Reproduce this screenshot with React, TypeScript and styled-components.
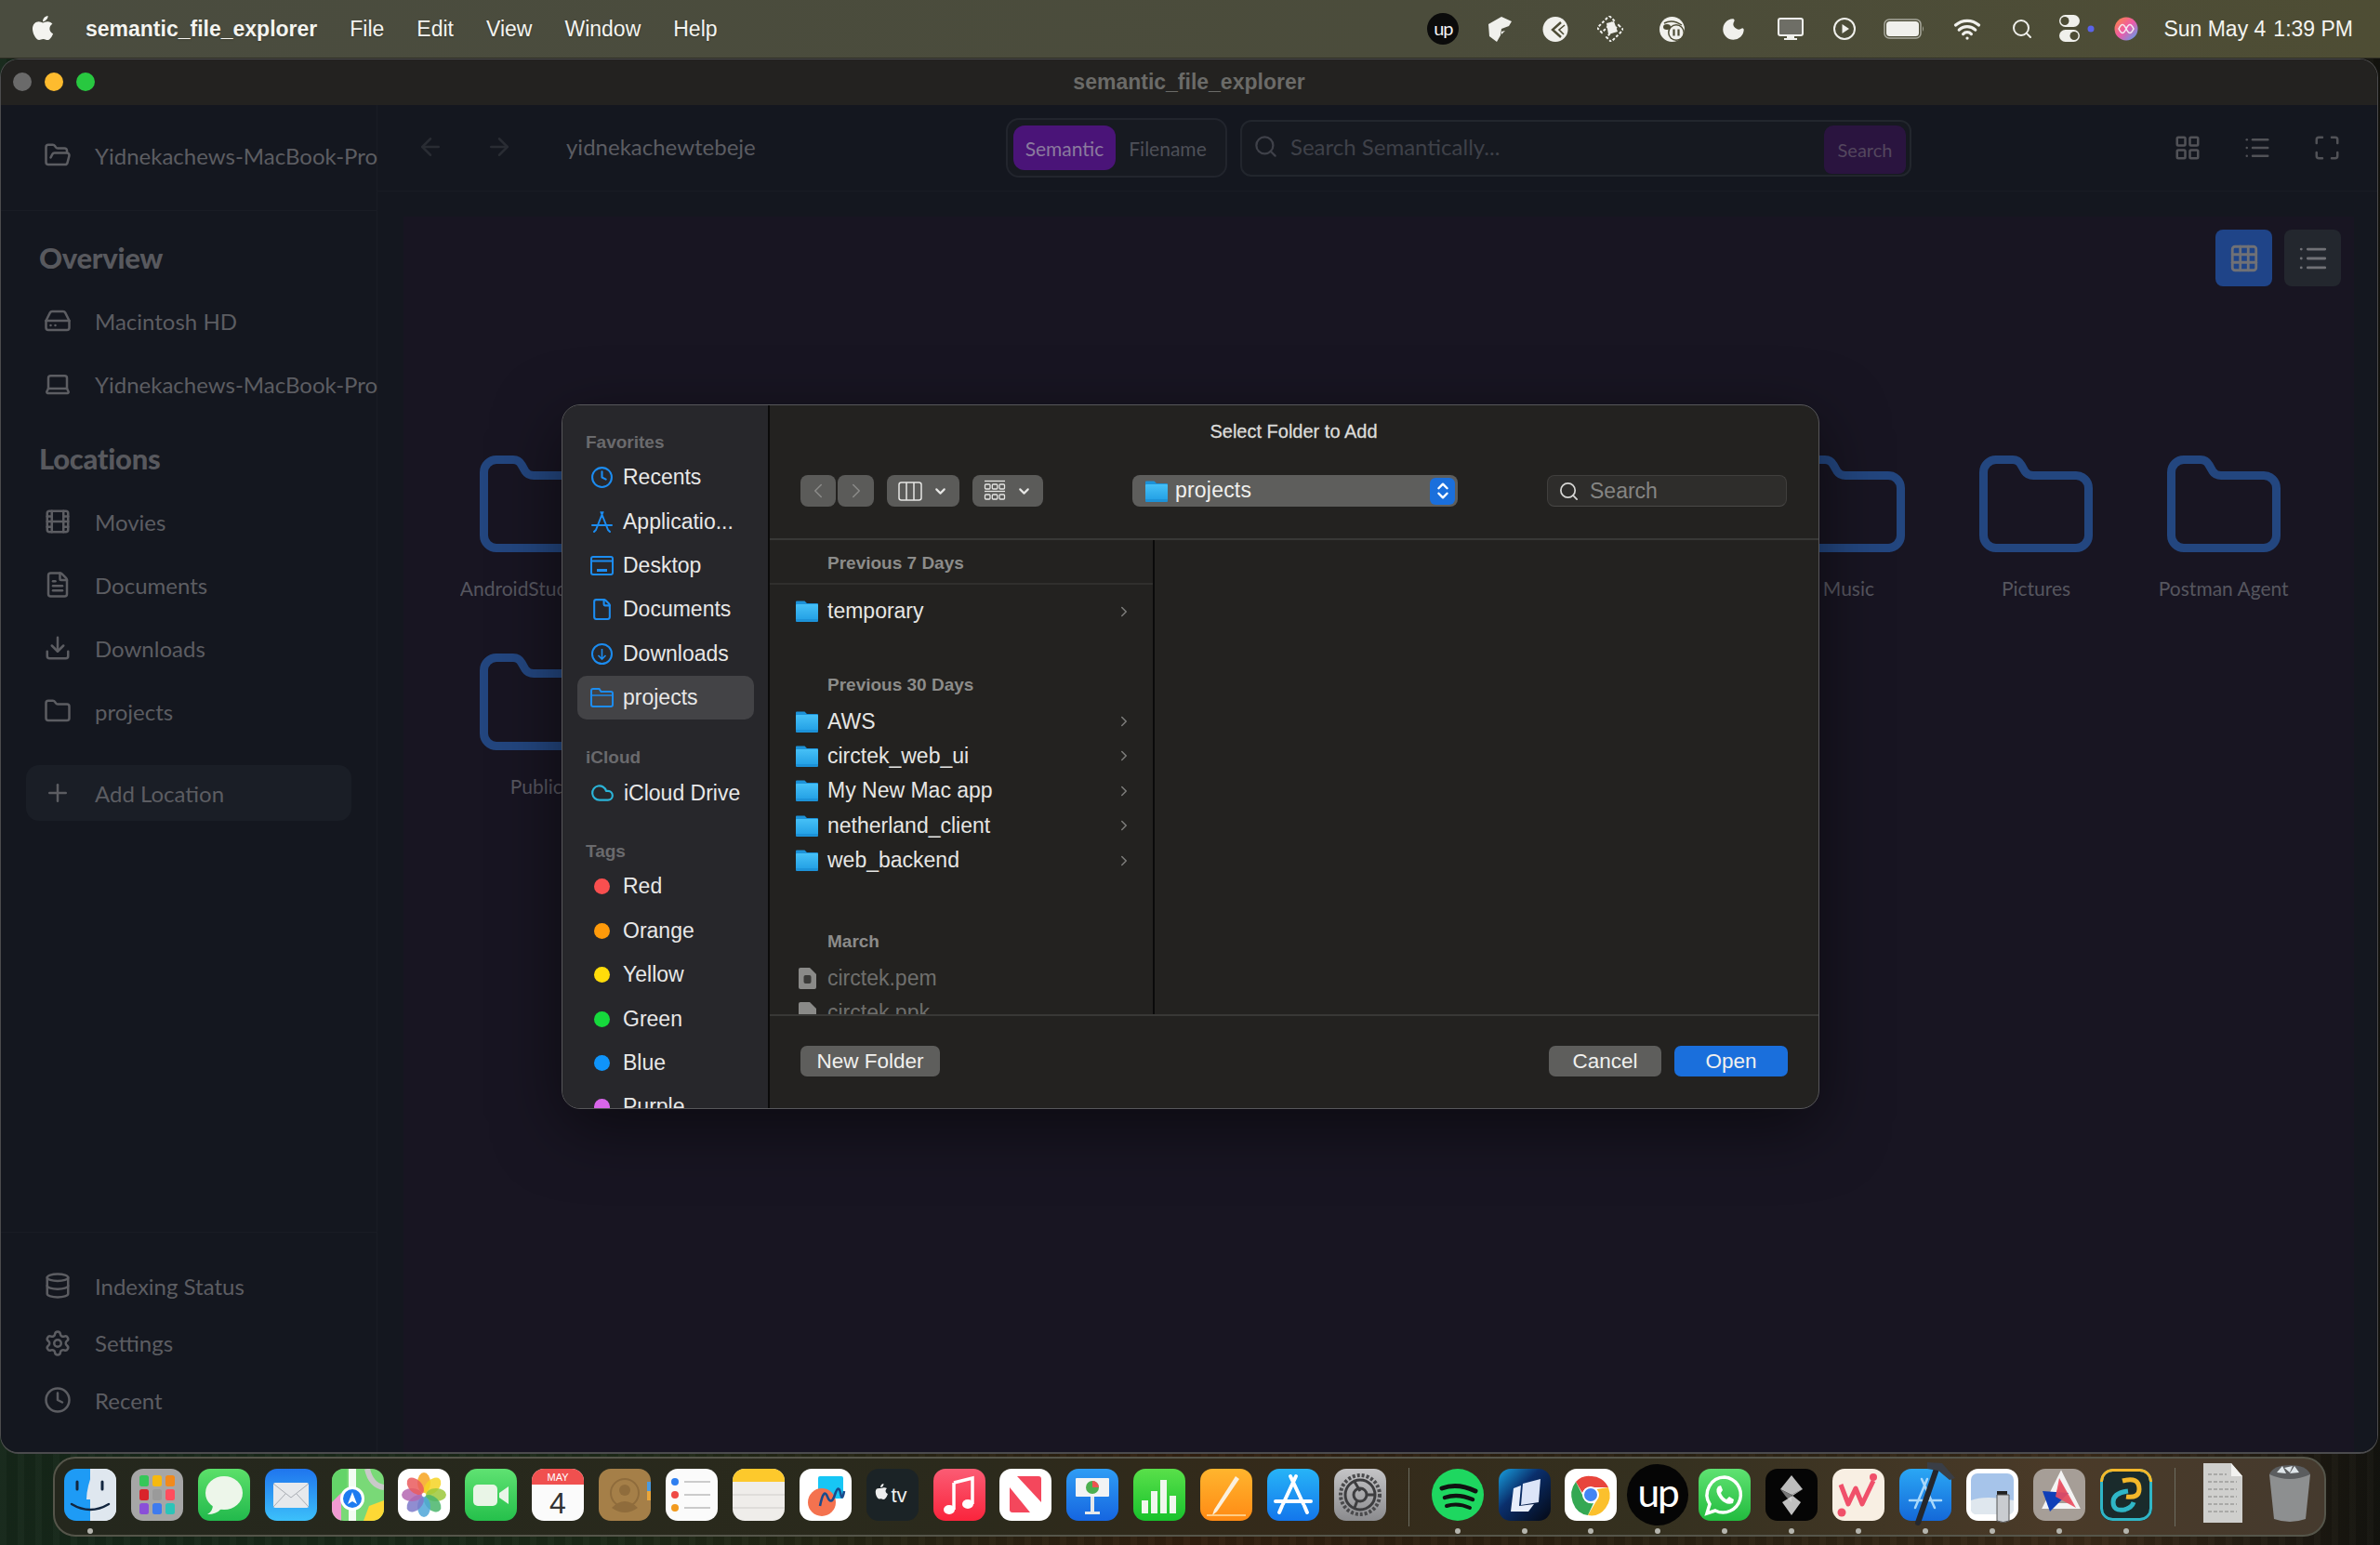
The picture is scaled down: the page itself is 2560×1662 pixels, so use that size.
import { FC, ReactNode } from "react";
import styled, { createGlobalStyle } from "styled-components";
import { FaApple } from "react-icons/fa";
import {
  ArrowLeft,
  ArrowRight,
  ChevronDown,
  ChevronLeft,
  ChevronRight,
  ChevronsUpDown,
  Clock,
  Cloud,
  Database,
  Download,
  File,
  FileText,
  Film,
  Folder,
  FolderOpen,
  Grid3x3,
  HardDrive,
  Laptop,
  LayoutGrid,
  List,
  Maximize,
  Moon,
  Plus,
  Search,
  Settings,
  Wifi,
} from "lucide-react";

const Global = createGlobalStyle`
  html, body {
    margin: 0;
    padding: 0;
    width: 2560px;
    height: 1662px;
    overflow: hidden;
    background: #1a2016;
  }
  * { box-sizing: border-box; }
`;

const Desktop = styled.div`
  width: 2560px;
  height: 1662px;
  display: flex;
  flex-direction: column;
  font-family: "Liberation Sans", Arial, sans-serif;
  background:
    repeating-linear-gradient(90deg, rgba(255, 255, 255, 0.015) 0 7px, rgba(0, 0, 0, 0.08) 7px 19px),
    linear-gradient(90deg, #16281a 0%, #1c2a18 25%, #33200f 50%, #2a2212 70%, #3a2a18 88%, #14140f 100%);
`;

/* ---------- menu bar ---------- */

const MenuBar = styled.header`
  height: 63px;
  flex: none;
  display: flex;
  align-items: center;
  padding-right: 29px;
  color: #f4f4f0;
  font-size: 23px;
  background: linear-gradient(90deg, #4a4c3f 0%, #4b4c3b 60%, #4e4d34 100%);
  border-bottom: 1px solid #2c2b22;
`;

const AppleSlot = styled.div`
  width: 92px;
  display: flex;
  justify-content: center;
  margin-top: -3px;
`;

const MenuItems = styled.nav`
  display: flex;
  gap: 35px;
`;

const MenuLabel = styled.span<{ $app?: boolean }>`
  font-weight: ${(p) => (p.$app ? 700 : 400)};
  text-shadow: 0 1px 2px rgba(0, 0, 0, 0.25);
`;

const Extras = styled.div`
  margin-left: auto;
  display: flex;
  align-items: center;
`;

const Extra = styled.div<{ $w: number }>`
  width: ${(p) => p.$w}px;
  display: flex;
  align-items: center;
  justify-content: center;
`;

const Clockface = styled.div`
  margin-left: 14px;
  display: flex;
  gap: 8px;
`;

/* ---------- app window ---------- */

const AppWindow = styled.section`
  position: relative;
  height: 1501px;
  flex: none;
  margin-right: 2px;
  display: flex;
  flex-direction: column;
  border: 1px solid #4b4b4d;
  border-bottom-width: 2px;
  border-radius: 20px;
  overflow: hidden;
  font-family: Lato, "Noto Sans", sans-serif;
`;

const TitleBar = styled.div`
  position: relative;
  height: 49px;
  flex: none;
  display: flex;
  align-items: center;
  justify-content: center;
  background: #232220;
  color: #6b6b68;
  font: 700 23px "Liberation Sans", Arial, sans-serif;
`;

const Lights = styled.div`
  position: absolute;
  left: 13px;
  top: 14px;
  display: flex;
  gap: 14px;
`;

const Light = styled.span<{ $c: string }>`
  width: 20px;
  height: 20px;
  border-radius: 50%;
  background: ${(p) => p.$c};
`;

const WindowBody = styled.div`
  flex: 1;
  min-height: 0;
  display: flex;
`;

const Sidebar = styled.aside`
  width: 405px;
  flex: none;
  display: flex;
  flex-direction: column;
  background: #14171f;
  border-right: 1px solid #191c24;
  color: #5c5d62;
`;

const SidebarHead = styled.div`
  height: 114px;
  flex: none;
  padding: 0 0 5px 27px;
  display: flex;
  align-items: center;
  font-size: 24px;
  white-space: nowrap;
  border-bottom: 1px solid #191c24;
`;

const HeadIcon = styled.span`
  width: 74px;
  padding-left: 19px;
  flex: none;
  display: flex;
`;

const SideGroup = styled.div`
  padding-left: 27px;
  display: flex;
  flex-direction: column;
  gap: 8px;
`;

const SideTitle = styled.h2`
  margin: 30px 0 18px;
  padding-left: 41px;
  height: 40px;
  line-height: 40px;
  font-size: 31px;
  font-weight: 900;
  color: #58595e;
  letter-spacing: -0.3px;
`;

const SideRow = styled.div<{ $tall?: boolean; $filled?: boolean }>`
  width: 350px;
  height: ${(p) => (p.$tall ? 48 : 60)}px;
  padding-left: 19px;
  display: flex;
  align-items: center;
  gap: 25px;
  font-size: 24px;
  white-space: nowrap;
  border-radius: 14px;
  background: ${(p) => (p.$filled ? "#1a1e26" : "transparent")};
  margin-top: ${(p) => (p.$filled ? 20 : 0)}px;
  svg {
    flex: none;
  }
`;

const SideFoot = styled.div`
  margin-top: auto;
  padding: 33px 0 32px 27px;
  display: flex;
  flex-direction: column;
  gap: 13.5px;
  border-top: 1px solid #191c24;
`;

const Main = styled.main`
  flex: 1;
  min-width: 0;
  display: flex;
  flex-direction: column;
  background: #14171f;
`;

const MainHead = styled.div`
  height: 93px;
  flex: none;
  display: flex;
  align-items: center;
  padding: 0 39px 0 42px;
  border-bottom: 1px solid #191c24;
`;

const NavArrows = styled.div`
  display: flex;
  gap: 44px;
  color: #292c33;
  margin-top: -2px;
`;

const PathName = styled.div`
  width: 530px;
  padding-left: 57px;
  font-size: 24px;
  color: #5b5c62;
  margin-top: -3px;
`;

const ModeToggle = styled.div`
  width: 238px;
  height: 64px;
  flex: none;
  padding: 6px;
  display: flex;
  align-items: center;
  background: #171a21;
  border: 2px solid #22252d;
  border-radius: 14px;
  font-size: 21px;
`;

const ModeOption = styled.span<{ $on?: boolean }>`
  height: 48px;
  width: ${(p) => (p.$on ? 112 : 114)}px;
  display: flex;
  align-items: center;
  justify-content: center;
  border-radius: 12px;
  background: ${(p) => (p.$on ? "#4a1478" : "transparent")};
  color: ${(p) => (p.$on ? "#8b7a9e" : "#4e5058")};
`;

const SearchBox = styled.div`
  width: 722px;
  height: 61px;
  flex: none;
  margin-left: 14px;
  padding: 3px 4px 0 12px;
  display: flex;
  align-items: center;
  background: #161920;
  border: 2px solid #22262d;
  border-radius: 12px;
  color: #3f4149;
`;

const SearchHint = styled.span`
  flex: 1;
  padding-left: 13px;
  font-size: 24px;
  margin-top: -7px;
`;

const SearchButton = styled.span`
  width: 88px;
  height: 52px;
  display: flex;
  align-items: center;
  justify-content: center;
  border-radius: 10px 10px 8px 8px;
  background: #2a143f;
  color: #54475e;
  font-size: 20px;
`;

const HeadTools = styled.div`
  margin-left: auto;
  display: flex;
  gap: 45px;
  color: #515257;
`;

const ContentWrap = styled.div`
  flex: 1;
  min-height: 0;
  padding: 27px 25px 0 28px;
  display: flex;
`;

const Content = styled.div`
  flex: 1;
  padding: 14px 14px 0 42px;
  background: #181522;
  display: flex;
  flex-direction: column;
`;

const ViewSwitch = styled.div`
  display: flex;
  justify-content: flex-end;
  gap: 13px;
`;

const ViewButton = styled.span<{ $on?: boolean }>`
  width: 61px;
  height: 61px;
  display: flex;
  align-items: center;
  justify-content: center;
  border-radius: 8px;
  color: #707176;
  background: ${(p) => (p.$on ? "#1f4488" : "#23272e")};
`;

const FolderGrid = styled.div`
  margin-top: 182px;
  display: grid;
  grid-template-columns: repeat(10, 201.67px);
  row-gap: 58px;
`;

const FolderCell = styled.div`
  display: flex;
  flex-direction: column;
  align-items: center;
  color: #23467f;
`;

const FolderName = styled.span`
  max-width: 164px;
  height: 24px;
  line-height: 24px;
  margin-top: 27px;
  font-size: 21px;
  color: #56565f;
  white-space: nowrap;
  overflow: hidden;
  text-overflow: ellipsis;
`;

/* ---------- open panel ---------- */

const Panel = styled.div`
  position: absolute;
  left: 603px;
  top: 371px;
  width: 1353px;
  height: 758px;
  display: flex;
  overflow: hidden;
  border-radius: 20px;
  border: 1px solid #57575a;
  background: #232220;
  font-family: "Liberation Sans", Arial, sans-serif;
  box-shadow: 0 20px 70px rgba(0, 0, 0, 0.5);
`;

const PanelSide = styled.div`
  width: 223px;
  flex: none;
  padding: 29px 0 0 16px;
  background: #27272b;
  border-right: 2px solid #0a0a0a;
  display: flex;
  flex-direction: column;
`;

const PanelGroup = styled.span<{ $first?: boolean; $gap?: number }>`
  height: 22px;
  line-height: 22px;
  margin: ${(p) => (p.$first ? 0 : (p.$gap ?? 30))}px 0 3px 9px;
  font-size: 19px;
  font-weight: 700;
  color: #6a6a6d;
`;

const PanelPlace = styled.div<{ $on?: boolean }>`
  width: 190px;
  height: 47.4px;
  flex: none;
  padding-left: 14px;
  display: flex;
  align-items: center;
  gap: 10px;
  font-size: 23px;
  color: #e8e8e8;
  border-radius: 10px;
  background: ${(p) => (p.$on ? "#434346" : "transparent")};
  svg {
    flex: none;
    color: #1c8cf0;
  }
`;

const TagDot = styled.span<{ $c: string }>`
  width: 17px;
  height: 17px;
  margin: 0 4px;
  border-radius: 50%;
  background: ${(p) => p.$c};
`;

const PanelMain = styled.div`
  flex: 1;
  min-width: 0;
  display: flex;
  flex-direction: column;
`;

const PanelHead = styled.div`
  height: 145px;
  flex: none;
  padding: 17px 34px 0 33px;
  border-bottom: 2px solid #383836;
`;

const PanelTitle = styled.div`
  height: 22px;
  line-height: 22px;
  text-align: center;
  font-size: 20px;
  color: #dcdcda;
  -webkit-text-stroke: 0.3px #dcdcda;
`;

const PanelTools = styled.div`
  margin-top: 36px;
  height: 34px;
  display: flex;
  justify-content: space-between;
`;

const ToolCluster = styled.div`
  display: flex;
  gap: 2px;
`;

const ToolButton = styled.span<{ $w: number; $gap?: number; $dim?: boolean }>`
  width: ${(p) => p.$w}px;
  height: 34px;
  margin-left: ${(p) => p.$gap ?? 0}px;
  display: flex;
  align-items: center;
  justify-content: center;
  gap: 11px;
  border-radius: 8px;
  background: #5b5b59;
  color: ${(p) => (p.$dim ? "#8b8b89" : "#e6e6e4")};
`;

const PathPopup = styled.div`
  width: 350px;
  height: 34px;
  padding: 0 3px 0 14px;
  display: flex;
  align-items: center;
  gap: 8px;
  border-radius: 8px;
  background: #5e5e5c;
  font-size: 23px;
  color: #f0f0ee;
`;

const PathText = styled.span`
  margin-top: -2px;
  letter-spacing: 0.2px;
`;

const Stepper = styled.span`
  margin-left: auto;
  width: 27px;
  height: 29px;
  display: flex;
  align-items: center;
  justify-content: center;
  border-radius: 6px;
  background: #1a6fdc;
  color: #fff;
`;

const FindField = styled.div`
  width: 258px;
  height: 34px;
  padding-left: 11px;
  display: flex;
  align-items: center;
  gap: 11px;
  border-radius: 8px;
  background: #2e2d2b;
  border: 1px solid #403f3d;
  border-bottom-color: #4a4947;
  font-size: 23px;
  color: #858583;
  svg {
    color: #d6d6d4;
  }
`;

const Browser = styled.div`
  flex: 1;
  min-height: 0;
  display: flex;
`;

const BrowserColumn = styled.div`
  width: 414px;
  flex: none;
  overflow: hidden;
  border-right: 2px solid #0a0a0a;
`;

const SectionHead = styled.div<{ $gap?: number; $sticky?: boolean }>`
  height: ${(p) => (p.$sticky ? 48 : 36)}px;
  margin-top: ${(p) => p.$gap ?? 0}px;
  margin-bottom: ${(p) => (p.$sticky ? 10 : 2)}px;
  padding: ${(p) => (p.$sticky ? 4 : 0)}px 0 0 62px;
  display: flex;
  align-items: center;
  font-size: 19px;
  font-weight: 700;
  color: #8c8c8a;
  border-bottom: ${(p) => (p.$sticky ? "2px solid #302f2d" : "none")};
`;

const BrowserRow = styled.div<{ $muted?: boolean }>`
  height: 37.4px;
  padding: 0 22px 0 28px;
  display: flex;
  align-items: center;
  gap: 10px;
  font-size: 23px;
  color: ${(p) => (p.$muted ? "#6f6f6d" : "#e6e6e4")};
`;

const RowChevron = styled(ChevronRight)`
  margin-left: auto;
  color: #7d7d7b;
`;

const PanelFoot = styled.div`
  height: 101px;
  flex: none;
  padding: 32px 33px 0 33px;
  display: flex;
  justify-content: space-between;
  border-top: 2px solid #383836;
`;

const FootActions = styled.div`
  display: flex;
  gap: 14px;
`;

const FootButton = styled.span<{ $w: number; $primary?: boolean }>`
  width: ${(p) => p.$w}px;
  height: 33px;
  display: flex;
  align-items: center;
  justify-content: center;
  border-radius: 7px;
  font-size: 22.5px;
  color: #f0f0ee;
  background: ${(p) => (p.$primary ? "#1a6fdc" : "#5e5e5c")};
`;

/* ---------- dock ---------- */

const Dock = styled.footer`
  position: relative;
  width: 2445px;
  height: 86px;
  flex: none;
  margin: 3px 0 0 57px;
  padding: 11px 0 0 10px;
  display: flex;
  align-items: flex-start;
  gap: 15.9px;
  border: 2px solid #55554a;
  border-radius: 24px;
  background: linear-gradient(90deg, #24271d 0%, #2b2a1c 40%, #352a1a 55%, #34301f 70%, #4a3a28 88%, #453a2e 100%);
`;

const Tile = styled.div<{ $bg: string; $round?: boolean; $scale?: number; $plain?: boolean }>`
  position: relative;
  width: 56px;
  height: 56px;
  flex: none;
  border-radius: ${(p) => (p.$round ? "50%" : "13px")};
  background: ${(p) => p.$bg};
  overflow: ${(p) => (p.$plain ? "visible" : "hidden")};
  transform: scale(${(p) => p.$scale ?? 1});
  svg {
    display: block;
    overflow: visible;
  }
`;

const TileWrap = styled.div<{ $running?: boolean }>`
  position: relative;
  width: 56px;
  height: 56px;
  flex: none;
  &::after {
    content: "";
    display: ${(p) => (p.$running ? "block" : "none")};
    position: absolute;
    left: 25px;
    bottom: -14px;
    width: 6px;
    height: 6px;
    border-radius: 50%;
    background: #b5b5ae;
  }
`;

const UpMark = styled.span`
  position: absolute;
  inset: 0;
  display: flex;
  align-items: center;
  justify-content: center;
  font: 400 36px Lato, sans-serif;
  letter-spacing: -2px;
  color: #fff;
  padding-bottom: 6px;
`;

const MiniUp = styled.span`
  width: 34px;
  height: 34px;
  display: flex;
  align-items: center;
  justify-content: center;
  border-radius: 50%;
  background: #0b0b0b;
  color: #f4f4f4;
  font: 400 20px Lato, sans-serif;
  letter-spacing: -1px;
  padding-bottom: 3px;
`;

const DockRule = styled.span`
  width: 1px;
  height: 63px;
  flex: none;
  margin: -1px 8px 0;
  background: #6c6c60;
`;

const PlainDockArt = styled.svg<{ $left: number }>`
  display: block;
  margin: -6px 0 0 ${(p) => p.$left}px;
`;

/* ---------- drawings ---------- */

const BigFolder: FC = () => (
  <svg width="122" height="104" viewBox="0 0 122 104" fill="none" stroke="currentColor" strokeWidth="9">
    <path d="M18 4.5H36Q42 4.500 45 10L49 17Q52 21.500 58 21.500H104A13.500 13.500 0 0 1 117.500 35V86A13.500 13.500 0 0 1 104 99.500H18A13.500 13.500 0 0 1 4.500 86V18A13.500 13.500 0 0 1 18 4.500Z" />
  </svg>
);

const BlueFolder: FC<{ w?: number; h?: number }> = ({ w = 24, h = 23 }) => (
  <svg width={w} height={h} viewBox="0 0 24 23" style={{ flex: "none" }}>
    <defs>
      <linearGradient id="bf" x1="0" y1="0" x2="0" y2="1">
        <stop offset="0" stopColor="#46c0f6" />
        <stop offset="1" stopColor="#25a2e6" />
      </linearGradient>
    </defs>
    <path d="M1 0.5H9.5L12 3H23A1 1 0 0 1 24 4V22A1 1 0 0 1 23 23H1A1 1 0 0 1 0 22V1.5A1 1 0 0 1 1 0.5Z" fill="#1c92d8" />
    <path d="M1 4H23A1 1 0 0 1 24 5V20H0V5A1 1 0 0 1 1 4Z" fill="url(#bf)" />
  </svg>
);

const ColumnsGlyph: FC = () => (
  <svg width="26" height="21" viewBox="0 0 26 21" fill="none" stroke="#e6e6e4" strokeWidth="1.5">
    <rect x="1" y="1" width="24" height="19" rx="2.500" />
    <path d="M9 1V20M17 1V20" />
  </svg>
);

const GalleryGlyph: FC = () => (
  <svg width="24" height="24" viewBox="0 0 24 24" fill="none" stroke="#e6e6e4" strokeWidth="1.300">
    <path d="M1 1.500H23" />
    <rect x="1.500" y="5" width="5.500" height="5" rx="1" />
    <rect x="9.300" y="5" width="5.500" height="5" rx="1" />
    <rect x="17" y="5" width="5.500" height="5" rx="1" />
    <path d="M1 12.500H23" />
    <rect x="1.500" y="16" width="5.500" height="5" rx="1" />
    <rect x="9.300" y="16" width="5.500" height="5" rx="1" />
    <rect x="17" y="16" width="5.500" height="5" rx="1" />
  </svg>
);

const v = "0 0 56 56";

type DockEntry = {
  key: string;
  bg: string;
  run?: boolean;
  round?: boolean;
  scale?: number;
  plain?: boolean;
  art: ReactNode;
};

const DOCK: DockEntry[] = [
  {
    key: "finder",
    bg: "linear-gradient(90deg,#1e9bf5 50%,#e3e9ef 50%)",
    run: true,
    art: (
      <svg viewBox={v}>
        <path d="M32 0Q24 20 24 33H30Q29 44 31 56H56V0Z" fill="#dfe7ef" />
        <path d="M14 14V22M41 14V22" stroke="#12263f" strokeWidth="3" strokeLinecap="round" />
        <path d="M8 38Q28 50 48 38" stroke="#12263f" strokeWidth="2.500" fill="none" strokeLinecap="round" />
      </svg>
    ),
  },
  {
    key: "launchpad",
    bg: "#a6a6a6",
    art: (
      <svg viewBox={v}>
        {["#35c759", "#f6b90f", "#f28a1c", "#d9232a", "#9a9a9a", "#ff4d5e", "#8a4fd8", "#3f7bee", "#2cc4b8"].map((c, i) => (
          <rect key={c} x={9 + (i % 3) * 14} y={7 + Math.floor(i / 3) * 15} width="10" height="12" rx="2.500" fill={c} />
        ))}
      </svg>
    ),
  },
  {
    key: "messages",
    bg: "linear-gradient(#5ce06a,#22b94c)",
    art: (
      <svg viewBox={v}>
        <ellipse cx="28" cy="26" rx="20" ry="18" fill="#edf6ea" />
        <path d="M16 38Q16 46 10 49Q20 49 25 43Z" fill="#edf6ea" />
      </svg>
    ),
  },
  {
    key: "mail",
    bg: "linear-gradient(#1f75ee,#3cc0fa)",
    art: (
      <svg viewBox={v}>
        <rect x="9" y="15" width="38" height="27" rx="2" fill="#e7e9ec" />
        <path d="M9 16L28 31L47 16M9 41L22 27M47 41L34 27" stroke="#a9adb3" strokeWidth="1" fill="none" />
      </svg>
    ),
  },
  {
    key: "maps",
    bg: "#79d977",
    art: (
      <svg viewBox={v}>
        <path d="M0 0H16V20L0 40Z" fill="#64d469" />
        <path d="M0 36L10 26V56H0Z" fill="#f19ad2" />
        <path d="M40 40L56 34V56H34Z" fill="#fdd835" />
        <path d="M38 0Q42 18 56 20" stroke="#c9c9c9" strokeWidth="6" fill="none" />
        <path d="M18 0H26V56H18Z" fill="#fff" opacity="0.9" />
        <circle cx="22" cy="32" r="13" fill="#fff" />
        <circle cx="22" cy="32" r="10" fill="#1e7bf0" />
        <path d="M22 25L27 38L22 35L17 38Z" fill="#fff" />
      </svg>
    ),
  },
  {
    key: "photos",
    bg: "#fff",
    art: (
      <svg viewBox={v}>
        {["#f7a520", "#f6d423", "#9cc83a", "#49b56b", "#4fa6d8", "#7c79c9", "#b466b0", "#ea5a5d"].map((c, i) => (
          <ellipse key={c} cx="28" cy="15" rx="7" ry="11" fill={c} opacity="0.85" transform={`rotate(${i * 45} 28 28)`} />
        ))}
      </svg>
    ),
  },
  {
    key: "facetime",
    bg: "linear-gradient(#5fe272,#25c04b)",
    art: (
      <svg viewBox={v}>
        <rect x="9" y="17" width="26" height="23" rx="5" fill="#e9f5e7" />
        <path d="M37 26L47 19V38L37 31Z" fill="#e9f5e7" />
      </svg>
    ),
  },
  {
    key: "calendar",
    bg: "#fbfbfb",
    art: (
      <svg viewBox={v}>
        <rect width="56" height="17" fill="#f0504f" />
        <text x="28" y="13" textAnchor="middle" fontFamily="Liberation Sans" fontSize="11" fill="#fff">
          MAY
        </text>
        <text x="28" y="48" textAnchor="middle" fontFamily="Liberation Sans" fontSize="32" fill="#333">
          4
        </text>
      </svg>
    ),
  },
  {
    key: "contacts",
    bg: "#a57f48",
    art: (
      <svg viewBox={v}>
        <circle cx="28" cy="26" r="15" fill="none" stroke="#8f6c3c" strokeWidth="2" />
        <circle cx="28" cy="23" r="6" fill="#8f6c3c" />
        <path d="M14 42Q28 28 42 42Q28 52 14 42Z" fill="#8f6c3c" />
        <path d="M52 14H56V24H52Z" fill="#4a9ae0" />
        <path d="M52 24H56V34H52Z" fill="#e9a53a" />
      </svg>
    ),
  },
  {
    key: "reminders",
    bg: "#fbfbfb",
    art: (
      <svg viewBox={v}>
        <circle cx="10" cy="14" r="4" fill="#2f7ff0" />
        <circle cx="10" cy="28" r="4" fill="#ef4a45" />
        <circle cx="10" cy="42" r="4" fill="#f29a1e" />
        <path d="M20 14H48M20 28H48M20 42H48" stroke="#bcbcbc" strokeWidth="1.400" />
      </svg>
    ),
  },
  {
    key: "notes",
    bg: "#efedea",
    art: (
      <svg viewBox={v}>
        <rect width="56" height="14" fill="#fdc92c" />
        <path d="M0 28H56M0 42H56" stroke="#cfcdc9" strokeWidth="1.200" />
      </svg>
    ),
  },
  {
    key: "freeform",
    bg: "#fff",
    art: (
      <svg viewBox={v}>
        <rect x="20" y="8" width="27" height="24" rx="2" fill="#17c6f5" />
        <circle cx="24" cy="36" r="15" fill="#f4724f" />
        <path d="M22 40Q26 20 30 30T38 28T44 26T48 24" fill="none" stroke="#1a4b8c" strokeWidth="2.600" />
      </svg>
    ),
  },
  {
    key: "tv",
    bg: "#1b2326",
    art: (
      <svg viewBox={v}>
        <text x="35" y="36" textAnchor="middle" fontFamily="Liberation Sans" fontSize="22" fill="#eee">
          tv
        </text>
        <path d="M15 21C18 21 19 19.500 22 21C20 22.500 20 26 23 27C21.500 31 20 33 18 33C16.500 33 16 32 14.500 32.500C11 33 8 24 11 21.500C12.500 20.500 14 21 15 21ZM15 20C15 17.500 17 16 18.500 16C18.500 18.500 17 20 15 20Z" fill="#eee" />
      </svg>
    ),
  },
  {
    key: "music",
    bg: "linear-gradient(#fb5c74,#fa243c)",
    art: (
      <svg viewBox={v}>
        <path d="M22 15L42 10V38" stroke="#fff" strokeWidth="3.500" fill="none" />
        <path d="M22 15V44" stroke="#fff" strokeWidth="3.500" />
        <ellipse cx="17" cy="44" rx="6" ry="5" fill="#fff" />
        <ellipse cx="37" cy="38" rx="6" ry="5" fill="#fff" />
      </svg>
    ),
  },
  {
    key: "news",
    bg: "#fff",
    art: (
      <svg viewBox={v}>
        <path d="M11 20L33 47H14Q11 47 11 44Z" fill="#f4475c" />
        <path d="M19 8H42Q45 8 45 11V36Z" fill="#f4475c" />
      </svg>
    ),
  },
  {
    key: "keynote",
    bg: "linear-gradient(#2f9df5,#1565e0)",
    art: (
      <svg viewBox={v}>
        <rect x="10" y="10" width="36" height="20" rx="1" fill="#f2f3f4" />
        <circle cx="28" cy="20" r="7" fill="#4caf50" />
        <path d="M28 20V13A7 7 0 0 1 35 20Z" fill="#ef5350" />
        <path d="M26 30H30V47H26Z" fill="#e6e8ea" />
        <rect x="20" y="46" width="16" height="3" fill="#e6e8ea" />
      </svg>
    ),
  },
  {
    key: "numbers",
    bg: "linear-gradient(#59e04a,#18c22c)",
    art: (
      <svg viewBox={v}>
        <rect x="9" y="34" width="7" height="14" fill="#f0f7ee" />
        <rect x="19" y="24" width="7" height="24" fill="#f0f7ee" />
        <rect x="29" y="12" width="7" height="36" fill="#f0f7ee" />
        <rect x="39" y="29" width="7" height="19" fill="#f0f7ee" />
      </svg>
    ),
  },
  {
    key: "pages",
    bg: "linear-gradient(#ffb52e,#ff8a14)",
    art: (
      <svg viewBox={v}>
        <path d="M38 8L15 44L13 50L18 46L42 11Z" fill="#fbf0dd" />
        <path d="M7 50H49" stroke="#ffe0a8" strokeWidth="1.500" />
      </svg>
    ),
  },
  {
    key: "appstore",
    bg: "linear-gradient(#27b4f7,#1376ec)",
    art: (
      <svg viewBox={v}>
        <path d="M31 8L17 38M25 8L39 38M9 35H47M16 40L13 47M40 40L43 47" stroke="#fff" strokeWidth="4" strokeLinecap="round" fill="none" />
      </svg>
    ),
  },
  {
    key: "settings",
    bg: "linear-gradient(#c4c4c6,#8b8b8e)",
    art: (
      <svg viewBox={v} fill="none">
        <circle cx="28" cy="28" r="21" stroke="#4a4a4c" strokeWidth="4" strokeDasharray="3 2" />
        <circle cx="28" cy="28" r="16" stroke="#3d3d3f" strokeWidth="3" />
        <circle cx="28" cy="28" r="7" stroke="#3d3d3f" strokeWidth="3" />
        <path d="M22 14L28 24M44 28H35M22 42L25 34" stroke="#3d3d3f" strokeWidth="3" />
      </svg>
    ),
  },
];

const DOCK_RIGHT: DockEntry[] = [
  {
    key: "spotify",
    bg: "#1ed760",
    run: true,
    round: true,
    art: (
      <svg viewBox={v} fill="none" stroke="#111" strokeLinecap="round">
        <path d="M11 21Q28 15 47 24" strokeWidth="5" />
        <path d="M14 31Q28 26 44 33" strokeWidth="4.500" />
        <path d="M16 40Q28 36 41 42" strokeWidth="4" />
      </svg>
    ),
  },
  {
    key: "linear",
    bg: "linear-gradient(135deg,#18a0e0 0%,#0a2f6c 40%,#040814 100%)",
    run: true,
    art: (
      <svg viewBox={v}>
        <path d="M16 21L24 18L22 40L38 38L32 46H13Z" fill="#e8eefb" />
        <path d="M26 16L45 11L43 36L24 39Z" fill="#dce5f8" />
      </svg>
    ),
  },
  {
    key: "chrome",
    bg: "#fff",
    run: true,
    art: (
      <svg viewBox={v}>
        <path d="M28 8A20 22 0 0 1 47 20H28A9 9 0 0 0 19 26L12 14A20 22 0 0 1 28 8Z" fill="#e8453c" />
        <path d="M12 14L22 34A9 9 0 0 0 31 37L25 50A20 22 0 0 1 12 14Z" fill="#34a853" />
        <path d="M47 20A20 22 0 0 1 25 50L35 33A9 9 0 0 0 34 22Z" fill="#fbc02d" />
        <circle cx="28" cy="28" r="9" fill="#fff" />
        <circle cx="28" cy="28" r="7" fill="#4285f4" />
      </svg>
    ),
  },
  {
    key: "upwork",
    bg: "#050505",
    run: true,
    round: true,
    scale: 1.18,
    art: <UpMark>up</UpMark>,
  },
  {
    key: "whatsapp",
    bg: "linear-gradient(#5fe272,#22bb3e)",
    run: true,
    art: (
      <svg viewBox={v}>
        <path d="M28 9A19 19 0 1 1 18 45L9 48L12 38A19 19 0 0 1 28 9Z" fill="none" stroke="#fff" strokeWidth="3.500" />
        <path d="M21 19Q17 24 23 32Q30 40 37 37L38 33L33 30L30 33Q26 31 24 26L26 23L24 18Z" fill="#fff" />
      </svg>
    ),
  },
  {
    key: "prism",
    bg: "#050505",
    run: true,
    art: (
      <svg viewBox={v}>
        <path d="M28 7L40 22L28 28L16 22Z" fill="#bdbdbd" />
        <path d="M16 22L28 28V36L22 30Z" fill="#777" />
        <path d="M40 22L28 28L38 36L28 50L18 36Z" fill="#e2e2e2" opacity="0.85" />
      </svg>
    ),
  },
  {
    key: "wps",
    bg: "#f8efe3",
    run: true,
    art: (
      <svg viewBox={v} fill="none">
        <path d="M9 17L17 38L25 21L32 38L44 13" stroke="#f0506a" strokeWidth="5" strokeLinejoin="round" />
        <circle cx="44" cy="9" r="4" fill="#f0506a" />
        <circle cx="10" cy="47" r="4.500" fill="#f0506a" />
      </svg>
    ),
  },
  {
    key: "xcode",
    bg: "linear-gradient(#2aa7f5,#1468d8)",
    run: true,
    art: (
      <svg viewBox={v} fill="none">
        <path d="M30 11L17 42M24 11L38 42M11 34H45" stroke="#a9d8fb" strokeWidth="2.500" strokeLinecap="round" />
      </svg>
    ),
  },
  {
    key: "preview",
    bg: "#fff",
    run: true,
    plain: true,
    art: (
      <svg viewBox={v}>
        <rect x="5" y="5" width="46" height="44" rx="7" fill="#a6c4ea" />
        <path d="M5 34Q20 28 51 34V43Q51 49 45 49H11Q5 49 5 43Z" fill="#dfe7ee" />
        <path d="M33 24H44V28H33Z" fill="#222" />
        <path d="M33 28H46V56Q40 59 33 56Z" fill="#c9ccd0" stroke="#555" />
      </svg>
    ),
  },
  {
    key: "craft",
    bg: "#a69e97",
    run: true,
    art: (
      <svg viewBox={v}>
        <path d="M30 8L46 40H14Z" fill="none" stroke="#f4f4f4" strokeWidth="6" />
        <path d="M10 24L38 26L18 46Z" fill="#0f3fb8" />
        <path d="M28 10L46 42L24 30Z" fill="#ec4c60" opacity="0.9" />
      </svg>
    ),
  },
  {
    key: "cursor",
    bg: "#1a2b2c",
    run: true,
    art: (
      <svg viewBox={v} fill="none">
        <rect x="1.500" y="1.500" width="53" height="53" rx="12" stroke="#2fb6c7" strokeWidth="3" />
        <path d="M1.500 14A12 12 0 0 1 14 1.500H42A12 12 0 0 1 54.500 14" stroke="#f3b72a" strokeWidth="3" />
        <path d="M24 13Q42 8 42 22Q42 32 28 30" stroke="#f3b72a" strokeWidth="5" />
        <path d="M30 24Q14 26 14 36Q14 46 26 44Q34 42 36 36" stroke="#2fb6c7" strokeWidth="5" />
      </svg>
    ),
  },
];

const HammerArt = styled.svg`
  position: absolute;
  left: 0;
  top: 0;
  overflow: visible;
`;

const Hammer: FC = () => (
  <HammerArt width="56" height="56" viewBox={v}>
    <path d="M20 58L40 0" stroke="#24272d" strokeWidth="6" strokeLinecap="round" />
    <path d="M30 -7L46 -6L60 10L54 12L42 2L30 0Z" fill="#3a3e46" />
  </HammerArt>
);

const SIDE_TOP = [
  { icon: <HardDrive size={30} />, label: "Macintosh HD" },
  { icon: <Laptop size={30} />, label: "Yidnekachews-MacBook-Pro" },
];

const SIDE_PLACES = [
  { icon: <Film size={30} />, label: "Movies" },
  { icon: <FileText size={30} />, label: "Documents" },
  { icon: <Download size={30} />, label: "Downloads" },
  { icon: <Folder size={30} />, label: "projects" },
];

const SIDE_FOOT = [
  { icon: <Database size={30} />, label: "Indexing Status" },
  { icon: <Settings size={30} />, label: "Settings" },
  { icon: <Clock size={30} />, label: "Recent" },
];

const FOLDERS = [
  "AndroidStudioProjects",
  "Applications",
  "Desktop",
  "Documents",
  "Downloads",
  "Library",
  "Movies",
  "Music",
  "Pictures",
  "Postman Agent",
  "Public",
];

const FAVORITES: { icon: ReactNode; label: string; on?: boolean }[] = [
  { icon: <Clock size={25} />, label: "Recents" },
  {
    icon: (
      <svg width="25" height="25" viewBox="0 0 25 25" fill="none" stroke="currentColor" strokeWidth="2" strokeLinecap="round">
        <path d="M13.500 2L6 21M11.500 2L19 21M2 16H23M4 23L6 21M21 23L19 21" />
      </svg>
    ),
    label: "Applicatio...",
  },
  {
    icon: (
      <svg width="25" height="25" viewBox="0 0 25 25" fill="none" stroke="currentColor" strokeWidth="2">
        <rect x="1" y="3" width="23" height="19" rx="2" />
        <path d="M1 7.500H24" />
        <path d="M7 17.500H18" strokeWidth="3" />
      </svg>
    ),
    label: "Desktop",
  },
  { icon: <File size={25} />, label: "Documents" },
  {
    icon: (
      <svg width="25" height="25" viewBox="0 0 25 25" fill="none" stroke="currentColor" strokeWidth="2">
        <circle cx="12.500" cy="12.500" r="10.500" />
        <path d="M12.500 7V18M8.500 14L12.500 18L16.500 14" strokeWidth="1.600" />
      </svg>
    ),
    label: "Downloads",
  },
  {
    icon: (
      <svg width="25" height="25" viewBox="0 0 25 25" fill="none" stroke="currentColor" strokeWidth="2">
        <path d="M3 3H9.500L11.500 6H22A2 2 0 0 1 24 8V20A2 2 0 0 1 22 22H3A2 2 0 0 1 1 20V5A2 2 0 0 1 3 3Z" />
        <path d="M1 10H24" strokeWidth="1.400" />
      </svg>
    ),
    label: "projects",
    on: true,
  },
];

const TAGS = [
  { c: "#f94f4f", label: "Red" },
  { c: "#ff9a0a", label: "Orange" },
  { c: "#ffdc0a", label: "Yellow" },
  { c: "#16d93c", label: "Green" },
  { c: "#0f94fa", label: "Blue" },
  { c: "#d966ea", label: "Purple" },
];

const RECENT_30 = ["AWS", "circtek_web_ui", "My New Mac app", "netherland_client", "web_backend"];

const KeyDoc: FC<{ lock?: boolean }> = ({ lock }) => (
  <svg width="24" height="24" viewBox="0 0 24 24" style={{ flex: "none" }}>
    <path d="M3 3A2 2 0 0 1 5 1H15L22 8V22A2 2 0 0 1 20 24H5A2 2 0 0 1 3 22Z" fill="#8a8a88" />
    {lock && <rect x="8.500" y="9" width="8" height="9" rx="2" fill="#3a3a38" />}
  </svg>
);

const App: FC = () => (
  <Desktop>
    <Global />
    <MenuBar>
      <AppleSlot>
        <FaApple size={30} />
      </AppleSlot>
      <MenuItems>
        <MenuLabel $app>semantic_file_explorer</MenuLabel>
        {["File", "Edit", "View", "Window", "Help"].map((m) => (
          <MenuLabel key={m}>{m}</MenuLabel>
        ))}
      </MenuItems>
      <Extras>
        <Extra $w={62}>
          <MiniUp>up</MiniUp>
        </Extra>
        <Extra $w={61}>
          <svg width="25" height="27" viewBox="0 0 25 27" fill="#f0f0ec">
            <path d="M0 8L14 0L25 5L22 10L14 13L13 20L9 27L1 21Z" />
            <path d="M14 16L18 15L14 19Z" />
          </svg>
        </Extra>
        <Extra $w={58}>
          <svg width="28" height="27" viewBox="0 0 28 27">
            <circle cx="14" cy="13.500" r="13.500" fill="#f0f0ec" />
            <path d="M20 6L11 14L20 22" stroke="#4d4c35" strokeWidth="2.400" fill="none" />
            <path d="M24 9L18 14L23 19" stroke="#4d4c35" strokeWidth="1.600" fill="none" />
          </svg>
        </Extra>
        <Extra $w={60}>
          <svg width="28" height="28" viewBox="0 0 28 28" fill="#f0f0ec">
            <path d="M13 0L18 5L5 18L0 13Z M23 10L28 15L15 28L10 23Z" fill="none" stroke="#f0f0ec" strokeWidth="2" strokeDasharray="3 2" />
            <path d="M10 8L18 6L22 17L12 20Z" />
          </svg>
        </Extra>
        <Extra $w={74}>
          <svg width="29" height="27" viewBox="0 0 29 27">
            <circle cx="13.500" cy="13.500" r="13.500" fill="#f0f0ec" />
            <ellipse cx="8" cy="11" rx="4" ry="3" fill="#4d4c35" />
            <path d="M5 7Q14 2 24 9" stroke="#4d4c35" strokeWidth="1.500" fill="none" />
            <circle cx="18" cy="17" r="9" fill="#4d4c35" />
            <circle cx="18" cy="17" r="7.500" fill="#f0f0ec" />
            <path d="M15.500 13.500V20.500M20.500 13.500V20.500" stroke="#4d4c35" strokeWidth="2.200" />
          </svg>
        </Extra>
        <Extra $w={56}>
          <Moon size={27} fill="#f0f0ec" stroke="#f0f0ec" />
        </Extra>
        <Extra $w={68}>
          <svg width="28" height="24" viewBox="0 0 28 24">
            <rect x="1" y="1" width="26" height="18" rx="2" fill="#6e6e66" stroke="#f0f0ec" strokeWidth="2" />
            <path d="M10 20H18V22H21V24H7V22H10Z" fill="#f0f0ec" />
          </svg>
        </Extra>
        <Extra $w={48}>
          <svg width="24" height="24" viewBox="0 0 24 24" fill="none" stroke="#f0f0ec" strokeWidth="2">
            <circle cx="12" cy="12" r="11" />
            <path d="M9.500 7L17 12L9.500 17Z" fill="#f0f0ec" stroke="none" />
          </svg>
        </Extra>
        <Extra $w={80}>
          <svg width="44" height="22" viewBox="0 0 44 22">
            <rect x="1" y="1" width="39" height="20" rx="5" fill="none" stroke="#a8a89c" strokeWidth="1.500" />
            <rect x="3" y="3" width="35" height="16" rx="3.500" fill="#f0f0ec" />
            <path d="M42 8Q44 11 42 14Z" fill="#a8a89c" />
          </svg>
        </Extra>
        <Extra $w={56}>
          <Wifi size={30} color="#f0f0ec" strokeWidth={2.6} />
        </Extra>
        <Extra $w={62}>
          <Search size={24} color="#f0f0ec" strokeWidth={2} />
        </Extra>
        <Extra $w={55}>
          <svg width="40" height="30" viewBox="0 0 40 30" fill="#f0f0ec">
            <rect x="1" y="0" width="22" height="13" rx="6.500" />
            <rect x="1" y="16" width="22" height="13" rx="6.500" />
            <circle cx="7" cy="6.500" r="4.500" fill="#4d4c35" />
            <circle cx="17" cy="22.500" r="4.500" fill="#4d4c35" />
            <circle cx="35" cy="15" r="3.500" fill="#5a63e8" />
          </svg>
        </Extra>
        <Extra $w={52}>
          <svg width="26" height="26" viewBox="0 0 26 26" fill="none">
            <defs>
              <linearGradient id="siri" x1="0" y1="0" x2="1" y2="1">
                <stop offset="0" stopColor="#ff8a3c" />
                <stop offset="0.500" stopColor="#ee5aa8" />
                <stop offset="1" stopColor="#4aa8f5" />
              </linearGradient>
            </defs>
            <circle cx="13" cy="13" r="12.500" fill="url(#siri)" />
            <path d="M5 13C8 7 10 7 13 13C16 19 18 19 21 13C18 7 16 7 13 13C10 19 8 19 5 13Z" stroke="#f4e8f0" strokeWidth="1.600" />
          </svg>
        </Extra>
        <Clockface>
          <span>Sun May 4</span>
          <span>1:39 PM</span>
        </Clockface>
      </Extras>
    </MenuBar>

    <AppWindow>
      <TitleBar>
        <Lights>
          <Light $c="#6a6a6a" />
          <Light $c="#febb2e" />
          <Light $c="#28c840" />
        </Lights>
        semantic_file_explorer
      </TitleBar>
      <WindowBody>
        <Sidebar>
          <SidebarHead>
            <HeadIcon>
              <FolderOpen size={30} />
            </HeadIcon>
            Yidnekachews-MacBook-Pro
          </SidebarHead>
          <SideTitle>Overview</SideTitle>
          <SideGroup>
            {SIDE_TOP.map((r) => (
              <SideRow key={r.label}>
                {r.icon}
                {r.label}
              </SideRow>
            ))}
          </SideGroup>
          <SideTitle>Locations</SideTitle>
          <SideGroup>
            {SIDE_PLACES.map((r) => (
              <SideRow key={r.label}>
                {r.icon}
                {r.label}
              </SideRow>
            ))}
            <SideRow $filled>
              <Plus size={30} />
              Add Location
            </SideRow>
          </SideGroup>
          <SideFoot>
            {SIDE_FOOT.map((r) => (
              <SideRow key={r.label} $tall>
                {r.icon}
                {r.label}
              </SideRow>
            ))}
          </SideFoot>
        </Sidebar>

        <Main>
          <MainHead>
            <NavArrows>
              <ArrowLeft size={30} />
              <ArrowRight size={30} />
            </NavArrows>
            <PathName>yidnekachewtebeje</PathName>
            <ModeToggle>
              <ModeOption $on>Semantic</ModeOption>
              <ModeOption>Filename</ModeOption>
            </ModeToggle>
            <SearchBox>
              <Search size={27} style={{ marginTop: -6 }} />
              <SearchHint>Search Semantically...</SearchHint>
              <SearchButton>Search</SearchButton>
            </SearchBox>
            <HeadTools>
              <LayoutGrid size={30} />
              <List size={30} />
              <Maximize size={30} />
            </HeadTools>
          </MainHead>
          <ContentWrap>
            <Content>
              <ViewSwitch>
                <ViewButton $on>
                  <Grid3x3 size={34} />
                </ViewButton>
                <ViewButton>
                  <List size={34} />
                </ViewButton>
              </ViewSwitch>
              <FolderGrid>
                {FOLDERS.map((f) => (
                  <FolderCell key={f}>
                    <BigFolder />
                    <FolderName>{f}</FolderName>
                  </FolderCell>
                ))}
              </FolderGrid>
            </Content>
          </ContentWrap>
        </Main>
      </WindowBody>

      <Panel>
        <PanelSide>
          <PanelGroup $first>Favorites</PanelGroup>
          {FAVORITES.map((f) => (
            <PanelPlace key={f.label} $on={f.on}>
              {f.icon}
              {f.label}
            </PanelPlace>
          ))}
          <PanelGroup>iCloud</PanelGroup>
          <PanelPlace>
            <Cloud size={26} style={{ color: "#2bb4d8" }} />
            iCloud Drive
          </PanelPlace>
          <PanelGroup $gap={28.5}>Tags</PanelGroup>
          {TAGS.map((t) => (
            <PanelPlace key={t.label}>
              <TagDot $c={t.c} />
              {t.label}
            </PanelPlace>
          ))}
        </PanelSide>

        <PanelMain>
          <PanelHead>
            <PanelTitle>Select Folder to Add</PanelTitle>
            <PanelTools>
              <ToolCluster>
                <ToolButton $w={38} $dim>
                  <ChevronLeft size={26} strokeWidth={1.4} />
                </ToolButton>
                <ToolButton $w={39} $dim>
                  <ChevronRight size={26} strokeWidth={1.4} />
                </ToolButton>
                <ToolButton $w={78} $gap={12}>
                  <ColumnsGlyph />
                  <ChevronDown size={17} strokeWidth={3} />
                </ToolButton>
                <ToolButton $w={76} $gap={12}>
                  <GalleryGlyph />
                  <ChevronDown size={17} strokeWidth={3} />
                </ToolButton>
              </ToolCluster>
              <PathPopup>
                <BlueFolder w={24} h={23} />
                <PathText>projects</PathText>
                <Stepper>
                  <ChevronsUpDown size={22} strokeWidth={2.6} />
                </Stepper>
              </PathPopup>
              <FindField>
                <Search size={23} strokeWidth={1.8} />
                Search
              </FindField>
            </PanelTools>
          </PanelHead>

          <Browser>
            <BrowserColumn>
              <SectionHead $sticky>Previous 7 Days</SectionHead>
              <BrowserRow>
                <BlueFolder />
                temporary
                <RowChevron size={18} />
              </BrowserRow>
              <SectionHead $gap={43}>Previous 30 Days</SectionHead>
              {RECENT_30.map((f) => (
                <BrowserRow key={f}>
                  <BlueFolder />
                  {f}
                  <RowChevron size={18} />
                </BrowserRow>
              ))}
              <SectionHead $gap={51}>March</SectionHead>
              <BrowserRow $muted>
                <KeyDoc lock />
                circtek.pem
              </BrowserRow>
              <BrowserRow $muted>
                <KeyDoc />
                circtek.ppk
              </BrowserRow>
            </BrowserColumn>
          </Browser>

          <PanelFoot>
            <FootButton $w={150}>New Folder</FootButton>
            <FootActions>
              <FootButton $w={121}>Cancel</FootButton>
              <FootButton $w={122} $primary>
                Open
              </FootButton>
            </FootActions>
          </PanelFoot>
        </PanelMain>
      </Panel>
    </AppWindow>

    <Dock>
      {DOCK.map((d) => (
        <TileWrap key={d.key} $running={d.run}>
          <Tile $bg={d.bg}>{d.art}</Tile>
        </TileWrap>
      ))}
      <DockRule />
      {DOCK_RIGHT.map((d) => (
        <TileWrap key={d.key} $running={d.run}>
          <Tile $bg={d.bg} $round={d.round} $scale={d.scale} $plain={d.plain}>
            {d.art}
          </Tile>
          {d.key === "xcode" && <Hammer />}
        </TileWrap>
      ))}
      <DockRule />
      <TileWrap>
        <PlainDockArt $left={7} width="42" height="64" viewBox="0 0 42 64">
          <path d="M0 0H30L42 14V64H0Z" fill="#cfcfcd" />
          <path d="M30 0L42 14H30Z" fill="#f2f2f0" />
          <path d="M5 12H25M5 20H36M5 28H36M5 36H36M5 44H36M5 52H36" stroke="#a9a9a7" strokeWidth="2" strokeDasharray="4 2" />
        </PlainDockArt>
      </TileWrap>
      <TileWrap>
        <PlainDockArt $left={4} width="48" height="64" viewBox="0 0 48 64">
          <path d="M2 12H46L41 60Q24 66 7 60Z" fill="#8d8f90" />
          <path d="M2 12Q24 22 46 12Q42 2 24 2Q6 2 2 12Z" fill="#5b5d5f" />
          <path d="M10 10L16 3L20 11ZM24 11L29 3L34 10ZM18 5L24 10L27 3Z" fill="#dfe6ea" />
        </PlainDockArt>
      </TileWrap>
    </Dock>
  </Desktop>
);

export default App;
